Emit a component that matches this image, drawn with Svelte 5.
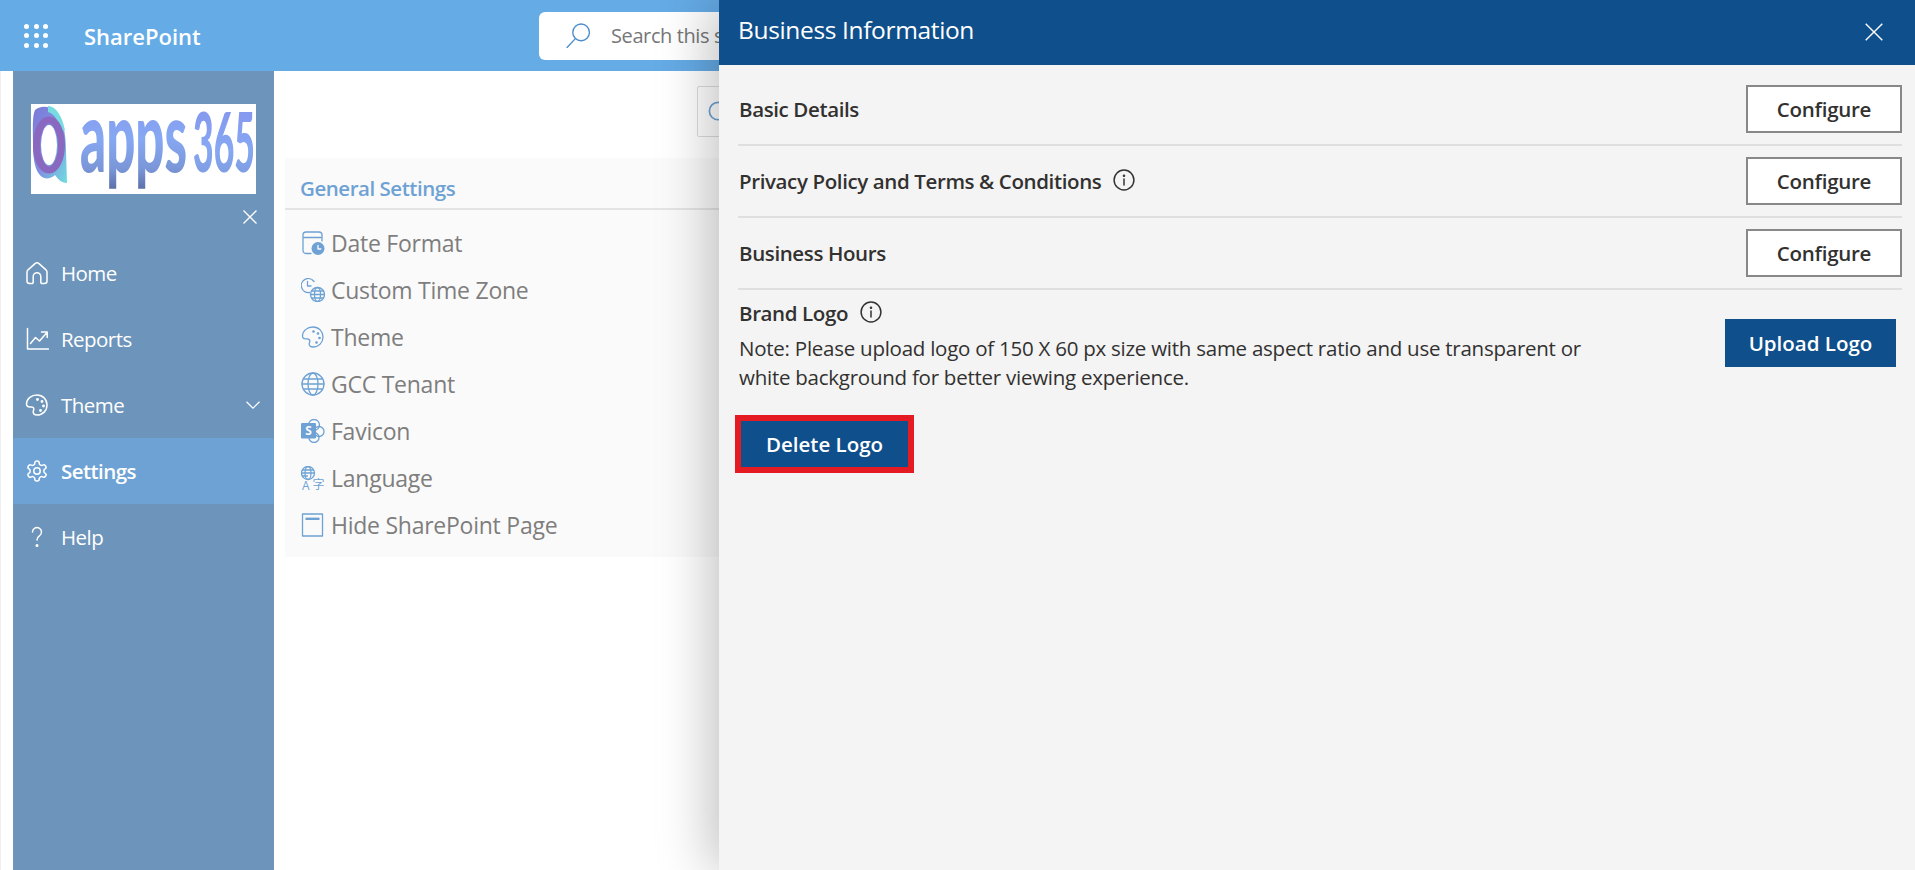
<script>
  const navItems = [
    { label: 'Home', icon: 'home' },
    { label: 'Reports', icon: 'reports' },
    { label: 'Theme', icon: 'palette', chevron: true },
    { label: 'Settings', icon: 'gear', active: true },
    { label: 'Help', icon: 'help' }
  ];

  const settings = [
    { label: 'Date Format', icon: 'date' },
    { label: 'Custom Time Zone', icon: 'zone' },
    { label: 'Theme', icon: 'palette' },
    { label: 'GCC Tenant', icon: 'globe' },
    { label: 'Favicon', icon: 'sharepoint' },
    { label: 'Language', icon: 'language' },
    { label: 'Hide SharePoint Page', icon: 'page' }
  ];

  const rows = [
    { label: 'Basic Details' },
    { label: 'Privacy Policy and Terms & Conditions', info: true },
    { label: 'Business Hours' }
  ];

  const gear =
    'M12.22 2h-.44a2 2 0 0 0-2 2v.18a2 2 0 0 1-1 1.73l-.43.25a2 2 0 0 1-2 0l-.15-.08a2 2 0 0 0-2.73.73l-.22.38a2 2 0 0 0 .73 2.73l.15.1a2 2 0 0 1 1 1.72v.51a2 2 0 0 1-1 1.74l-.15.09a2 2 0 0 0-.73 2.73l.22.38a2 2 0 0 0 2.73.73l.15-.08a2 2 0 0 1 2 0l.43.25a2 2 0 0 1 1 1.73V20a2 2 0 0 0 2 2h.44a2 2 0 0 0 2-2v-.18a2 2 0 0 1 1-1.73l.43-.25a2 2 0 0 1 2 0l.15.08a2 2 0 0 0 2.73-.73l.22-.39a2 2 0 0 0-.73-2.73l-.15-.08a2 2 0 0 1-1-1.74v-.5a2 2 0 0 1 1-1.74l.15-.09a2 2 0 0 0 .73-2.73l-.22-.38a2 2 0 0 0-2.73-.73l-.15.08a2 2 0 0 1-2 0l-.43-.25a2 2 0 0 1-1-1.73V4a2 2 0 0 0-2-2z';
</script>

{#snippet icon(name)}
  <svg class="icon" viewBox="0 0 24 24" fill="none" stroke="currentColor" stroke-width="1.3" stroke-linecap="round" stroke-linejoin="round">
    {#if name === 'home'}
      <path d="M10 2.600a3 3 0 0 1 4 0l7 6.300c.7.6 1 1.400 1 2.200v8.900a2.500 2.500 0 0 1-2.500 2.500h-2.500a1.200 1.200 0 0 1-1.200-1.200v-5.800a3.800 3.800 0 0 0-7.600 0v5.800a1.200 1.200 0 0 1-1.200 1.200H4.500A2.500 2.500 0 0 1 2 20v-8.900c0-.8.3-1.600 1-2.200z" />
    {:else if name === 'reports'}
      <path d="M2.500 1.500v20.500h21" />
      <path d="M5.500 16.500l5-6 4 3.500 7.500-8.500M16.500 5h5.700v5.500" />
    {:else if name === 'palette'}
      <path d="M1.500 11c0-5 4.600-9 10.500-9 5.800 0 10 4.400 10 10s-4.200 10-10 10c-2.400 0-3.800-1.200-3.800-2.900 0-1.300.6-1.900.6-3 0-1.300-1.100-2.200-2.500-2.200H5c-2.200 0-3.500-1.100-3.500-2.900z" />
      <circle cx="12.500" cy="6.500" r=".7" fill="currentColor" />
      <circle cx="17" cy="8.500" r=".7" fill="currentColor" />
      <circle cx="18.500" cy="13" r=".7" fill="currentColor" />
      <circle cx="15.500" cy="17.500" r=".7" fill="currentColor" />
    {:else if name === 'gear'}
      <path d={gear} />
      <circle cx="12" cy="12" r="3.200" />
    {:else if name === 'help'}
      <path d="M7.500 7a4.500 4.500 0 1 1 6.900 3.800c-1.500 1-2.400 2.100-2.400 4.200" />
      <circle cx="12" cy="20.500" r=".8" fill="currentColor" />
    {:else if name === 'date'}
      <path d="M10 22.500H5a3 3 0 0 1-3-3V4a3 3 0 0 1 3-3h13a3 3 0 0 1 3 3v6M2 6.500h19" />
      <circle cx="17" cy="17.500" r="6.500" fill="currentColor" stroke="none" />
      <path d="M17 14.500v3.500h2.800" stroke="#fafafa" />
    {:else if name === 'zone'}
      <path d="M8.500 14.500A7 7 0 1 1 13 3.500" />
      <path d="M6.500 3.500v4.500h3.500" />
      <circle cx="16.500" cy="16.500" r="7" />
      <ellipse cx="16.500" cy="16.500" rx="3" ry="7" />
      <path d="M9.500 16.500h14M10.500 13h12M10.500 20h12" />
    {:else if name === 'globe'}
      <circle cx="12" cy="12" r="11" />
      <ellipse cx="12" cy="12" rx="5" ry="11" />
      <path d="M1 12h22M2.500 7h19M2.500 17h19" />
    {:else if name === 'sharepoint'}
      <circle cx="13" cy="6" r="5.500" />
      <circle cx="18" cy="12.500" r="5" />
      <circle cx="13" cy="18.500" r="5" />
      <rect x="0" y="4" width="15" height="15.500" rx="1.200" fill="currentColor" stroke="none" />
      <text x="7.500" y="16.300" class="sp">S</text>
    {:else if name === 'language'}
      <circle cx="7" cy="7" r="6.500" />
      <ellipse cx="7" cy="7" rx="3" ry="6.500" />
      <path d="M.5 7h13M1.500 4h11M1.500 10h5" />
      <text x="1" y="23.500" class="lang">A</text>
      <text x="11.500" y="23" class="lang">字</text>
    {:else if name === 'page'}
      <rect x="1.500" y="1" width="20" height="22" />
      <path d="M4.500 5.800h14" stroke-width="2.400" stroke-linecap="butt" />
    {/if}
  </svg>
{/snippet}

{#snippet info()}
  <svg class="info" viewBox="0 0 24 24" fill="none" stroke="currentColor" stroke-width="1.600" stroke-linecap="round">
    <circle cx="12" cy="12" r="10.800" />
    <path d="M12 11v6.500" />
    <circle cx="12" cy="7.300" r=".6" fill="currentColor" />
  </svg>
{/snippet}

<div class="page">
  <header class="topbar">
    <div class="waffle">
      {#each Array(9) as _}<span></span>{/each}
    </div>
    <span class="brand">SharePoint</span>
    <div class="sitesearch">
      <svg viewBox="0 0 24 24" fill="none" stroke="#4e8ccb" stroke-width="1.300" stroke-linecap="round">
        <circle cx="14.500" cy="9" r="8" />
        <path d="M9 15L1 23.500" />
      </svg>
      <span>Search this site</span>
    </div>
  </header>

  <div class="layout">
    <div class="strip"></div>

    <nav class="sidebar">
      <div class="logo">
        <svg viewBox="0 0 225 90">
          <defs>
            <linearGradient id="txt" x1="0" y1="0" x2="0" y2="1">
              <stop offset="0" stop-color="#8690ee" />
              <stop offset=".55" stop-color="#86a8f2" />
              <stop offset=".8" stop-color="#7a96d8" />
              <stop offset="1" stop-color="#56689e" />
            </linearGradient>
            <linearGradient id="num" x1="0" y1="0" x2="0" y2="1">
              <stop offset="0" stop-color="#8690ee" />
              <stop offset=".6" stop-color="#86a8f2" />
              <stop offset="1" stop-color="#7a96d8" />
            </linearGradient>
            <linearGradient id="rim" x1="0" y1="0" x2="1" y2="1">
              <stop offset="0" stop-color="#7c7ad8" />
              <stop offset=".5" stop-color="#7f8fe0" />
              <stop offset="1" stop-color="#6fdde0" />
            </linearGradient>
            <filter id="soft"><feGaussianBlur stdDeviation=".6" /></filter>
          </defs>
          <g filter="url(#soft)">
            <path d="M4 6c4-4 14-5 20 1 8 8 11 22 11 40l1 32c-6 0-9-4-12-8-8 7-22 6-22-30C2 27 1 12 4 6z" fill="url(#rim)" />
            <path d="M17 2c8 0 14 10 17 24l-3 2c-3-10-7-18-14-20z" fill="#76dce0" />
            <ellipse cx="18" cy="41" rx="12.500" ry="25" fill="none" stroke="#8a68bf" stroke-width="7" />
            <ellipse cx="18" cy="41" rx="8" ry="20" fill="#fff" />
            <text x="49" y="68" class="word" font-size="100" textLength="107" lengthAdjust="spacingAndGlyphs" fill="url(#txt)">apps</text>
            <text x="162" y="68" class="word" font-size="82" textLength="62" lengthAdjust="spacingAndGlyphs" fill="url(#num)">365</text>
          </g>
        </svg>
      </div>
      <div class="collapse">
        <svg viewBox="0 0 14 14" stroke="#fff" stroke-width="1.300"><path d="M.5.5l13 13M13.500.5l-13 13" /></svg>
      </div>
      {#each navItems as item}
        <a class="navitem" class:active={item.active}>
          {@render icon(item.icon)}
          <span>{item.label}</span>
          {#if item.chevron}
            <svg class="chevron" viewBox="0 0 14 8" fill="none" stroke="#fff" stroke-width="1.200"><path d="M.5.800L7 7.200 13.500.8" /></svg>
          {/if}
        </a>
      {/each}
    </nav>

    <main class="content">
      <div class="mainsearch">
        <svg viewBox="0 0 24 24" fill="none" stroke="#6ea2d4" stroke-width="1.800"><circle cx="11" cy="11" r="9.500" /></svg>
      </div>
      <section class="card">
        <h2>General Settings</h2>
        <ul>
          {#each settings as s}
            <li>{@render icon(s.icon)}<span>{s.label}</span></li>
          {/each}
        </ul>
      </section>
    </main>
  </div>

  <aside class="panel">
    <div class="panelhead">
      <h1>Business Information</h1>
      <svg viewBox="0 0 18 18" stroke="#fff" stroke-width="1.400"><path d="M.7.700l16.600 16.600M17.300.700L.7 17.300" /></svg>
    </div>
    <div class="panelbody">
      {#each rows as row}
        <div class="row">
          <span class="rowlabel">{row.label}</span>
          {#if row.info}{@render info()}{/if}
          <button class="configure">Configure</button>
        </div>
      {/each}
      <div class="brandlogo">
        <div class="brandtext">
          <div class="brandtitle"><span class="rowlabel">Brand Logo</span>{@render info()}</div>
          <p>Note: Please upload logo of 150 X 60 px size with same aspect ratio and use transparent or white background for better viewing experience.</p>
        </div>
        <button class="primary upload">Upload Logo</button>
      </div>
      <div class="highlight"><button class="primary">Delete Logo</button></div>
    </div>
  </aside>
</div>

<style>
  :global(body) {
    margin: 0;
    background: #fff;
  }
  .page {
    position: relative;
    width: 1915px;
    height: 870px;
    overflow: hidden;
    font-family: "Open Sans", "Noto Sans", sans-serif;
    color: #323130;
  }
  .topbar {
    height: 71px;
    background: #65abe6;
    display: flex;
    align-items: center;
    color: #fff;
  }
  .waffle {
    margin-left: 24px;
    width: 24px;
    display: grid;
    grid-template-columns: repeat(3, 5px);
    grid-auto-rows: 5px;
    gap: 4.500px;
  }
  .waffle span {
    background: #fff;
    border-radius: 50%;
  }
  .brand {
    margin-left: 36px;
    width: 118px;
    font-size: 22px;
    font-weight: 600;
    white-space: nowrap;
  }
  .sitesearch {
    margin-left: 337px;
    width: 400px;
    height: 48px;
    background: #fff;
    border-radius: 6px;
    display: flex;
    align-items: center;
    color: #777;
    font-size: 20px;
    letter-spacing: -0.4px;
  }
  .sitesearch svg {
    width: 25px;
    height: 25px;
    margin: 0 20px 0 27px;
  }
  .layout {
    display: flex;
    height: 799px;
  }
  .strip {
    width: 12px;
    border-left: 1px solid #eee;
  }
  .sidebar {
    width: 261px;
    background: #6d94ba;
    color: #fff;
  }
  .logo {
    margin: 33px 0 0 18px;
    width: 225px;
    height: 90px;
    background: #fff;
  }
  .logo svg {
    display: block;
    width: 225px;
    height: 90px;
  }
  .word {
    font-family: Lato, sans-serif;
    font-weight: 900;
  }
  .collapse {
    height: 46px;
    display: flex;
    justify-content: flex-end;
    align-items: center;
    padding-right: 17px;
  }
  .collapse svg {
    width: 14px;
    height: 14px;
  }
  .navitem {
    height: 66px;
    display: flex;
    align-items: center;
    padding-left: 12px;
    font-size: 20.500px;
    letter-spacing: -0.55px;
  }
  .navitem .icon {
    width: 24px;
    height: 24px;
    margin-right: 12px;
    stroke-width: 1.500;
  }
  .navitem.active {
    background: #6ea2d4;
    font-weight: 600;
    border-radius: 2px;
  }
  .chevron {
    width: 14px;
    height: 8px;
    margin-left: auto;
    margin-right: 14px;
  }
  .content {
    flex: 1;
    min-width: 0;
  }
  .mainsearch {
    margin: 15px 0 0 423px;
    width: 500px;
    height: 49px;
    border: 1px solid #dcdcdc;
    border-radius: 2px;
    display: flex;
    align-items: center;
    padding-left: 10px;
  }
  .mainsearch svg {
    width: 22px;
    height: 22px;
  }
  .card {
    margin: 21px 0 0 11px;
    height: 399px;
    background: #fafafa;
  }
  .card h2 {
    margin: 0;
    height: 52px;
    box-sizing: border-box;
    padding: 17px 0 0 15px;
    border-bottom: 2px solid #e4e4e4;
    font-size: 20.500px;
    line-height: 27px;
    font-weight: 600;
    letter-spacing: -0.47px;
    color: #6ea2d4;
  }
  .card ul {
    list-style: none;
    margin: 0;
    padding: 9px 0 0 16px;
  }
  .card li {
    height: 47.100px;
    display: flex;
    align-items: center;
    font-size: 23px;
    color: #7e7e7e;
    letter-spacing: -0.25px;
  }
  .card .icon {
    width: 24px;
    height: 24px;
    margin-right: 6px;
    color: #6ea2d4;
    flex: none;
  }
  .sp {
    font: 700 12px "Open Sans", sans-serif;
    fill: #fafafa;
    stroke: none;
    text-anchor: middle;
  }
  .lang {
    font: 400 12px "Open Sans", "Noto Sans CJK SC", sans-serif;
    fill: currentColor;
    stroke: none;
  }
  .panel {
    position: absolute;
    top: 0;
    right: 0;
    bottom: 0;
    width: 1196px;
    background: #f4f4f4;
    box-shadow: -8px 0 50px rgba(0, 0, 0, 0.25);
  }
  .panelhead {
    height: 65px;
    background: #0f4f8b;
    color: #fff;
    display: flex;
    align-items: center;
    justify-content: space-between;
    padding: 0 32px 6px 19px;
    box-sizing: border-box;
  }
  .panelhead h1 {
    margin: 0;
    font-size: 24.500px;
    font-weight: 400;
    letter-spacing: -0.35px;
  }
  .panelhead svg {
    width: 18px;
    height: 18px;
    margin-top: 5px;
  }
  .panelbody {
    padding: 9px 13px 0 20px;
  }
  .row {
    height: 70px;
    display: flex;
    align-items: center;
    border-bottom: 2px solid #dfdfdf;
    margin-left: -1px;
    padding-left: 1px;
  }
  .rowlabel {
    font-size: 20.500px;
    font-weight: 600;
    letter-spacing: -0.38px;
    white-space: nowrap;
  }
  .info {
    width: 22px;
    height: 22px;
    margin: -3px 0 0 12px;
  }
  button {
    font-family: inherit;
    font-size: 20.500px;
    font-weight: 600;
    cursor: pointer;
  }
  .configure {
    margin-left: auto;
    width: 156px;
    height: 48px;
    background: #fff;
    border: 2px solid #8a8886;
    color: #323130;
    letter-spacing: -0.27px;
  }
  .brandlogo {
    display: flex;
    justify-content: space-between;
    padding-top: 8px;
  }
  .brandtitle {
    display: flex;
    align-items: center;
    height: 30px;
  }
  .brandtext p {
    margin: 6px 0 0;
    width: 845px;
    font-size: 20.500px;
    line-height: 29px;
    letter-spacing: -0.25px;
  }
  .primary {
    background: #0f4f8b;
    color: #fff;
    border: 0;
    height: 48px;
    width: 171px;
  }
  .upload {
    margin: 21px 6px 0 0;
  }
  .highlight {
    margin: 23px 0 0 -4px;
    width: 167px;
    border: 6px solid #e51b24;
    height: 46px;
  }
  .highlight .primary {
    display: block;
    width: 100%;
    height: 100%;
  }
</style>
